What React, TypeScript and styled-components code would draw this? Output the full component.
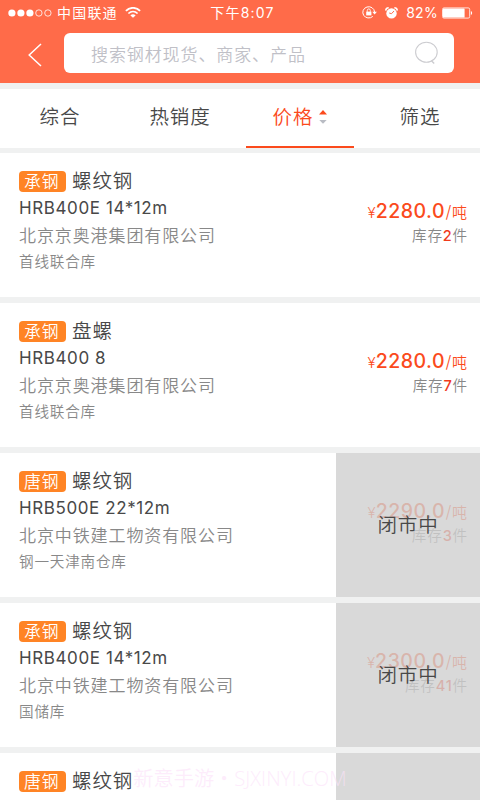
import React from 'react';
import styled, { createGlobalStyle } from 'styled-components';

interface Product {
  id: number;
  brand: string;
  name: string;
  spec: string;
  company: string;
  warehouse: string;
  price: string;
  stock: number;
  closed?: boolean;
}

const products: Product[] = [
  {
    id: 1,
    brand: '承钢',
    name: '螺纹钢',
    spec: 'HRB400E 14*12m',
    company: '北京京奥港集团有限公司',
    warehouse: '首线联合库',
    price: '2280.0',
    stock: 2,
  },
  {
    id: 2,
    brand: '承钢',
    name: '盘螺',
    spec: 'HRB400 8',
    company: '北京京奥港集团有限公司',
    warehouse: '首线联合库',
    price: '2280.0',
    stock: 7,
  },
  {
    id: 3,
    brand: '唐钢',
    name: '螺纹钢',
    spec: 'HRB500E 22*12m',
    company: '北京中铁建工物资有限公司',
    warehouse: '钢一天津南仓库',
    price: '2290.0',
    stock: 3,
    closed: true,
  },
  {
    id: 4,
    brand: '承钢',
    name: '螺纹钢',
    spec: 'HRB400E 14*12m',
    company: '北京中铁建工物资有限公司',
    warehouse: '国储库',
    price: '2300.0',
    stock: 41,
    closed: true,
  },
  {
    id: 5,
    brand: '唐钢',
    name: '螺纹钢',
    spec: '',
    company: '',
    warehouse: '',
    price: '',
    stock: 0,
    closed: true,
  },
];

const tabs = ['综合', '热销度', '价格', '筛选'];

export default function App() {
  return (
    <Page>
      <GlobalStyle />
      <Header>
        <StatusBar />
        <SearchRow>
          <BackIcon width="14" height="24" viewBox="0 0 14 24">
            <path d="M13 1 1.2 12 13 23" fill="none" stroke="#fff" strokeWidth="1.5" />
          </BackIcon>
          <SearchBox>
            <Placeholder>搜索钢材现货、商家、产品</Placeholder>
            <svg width="24" height="24" viewBox="0 0 24 24" fill="none" stroke="#ccccd0">
              <ellipse cx="12.4" cy="11.2" rx="10.8" ry="10" strokeWidth="1.1" />
              <path d="m17.4 19.7 2.8 2.8" strokeWidth="1.4" />
            </svg>
          </SearchBox>
        </SearchRow>
      </Header>
      <TabBar>
        {tabs.map((tab) => (
          <Tab key={tab} $active={tab === '价格'}>
            {tab}
            {tab === '价格' && (
              <svg width="8" height="14" viewBox="0 0 8 14">
                <path d="M0 4.5 4 0l4 4.5z" fill="#fb4a1c" />
                <path d="M0.3 10h7.4L4 13.8z" fill="#b9bcc4" />
              </svg>
            )}
          </Tab>
        ))}
      </TabBar>
      <List>
        {products.map((product) => (
          <ProductCard key={product.id} product={product} />
        ))}
      </List>
      <Watermark>新意手游・SJXINYI.COM</Watermark>
    </Page>
  );
}

function StatusBar() {
  return (
    <Status>
      <StatusLeft>
        <svg width="44" height="8" viewBox="0 0 44 8" fill="#fff">
          <circle cx="3.9" cy="4" r="3.6" />
          <circle cx="12.9" cy="4" r="3.6" />
          <circle cx="21.9" cy="4" r="3.6" />
          <g fill="none" stroke="#fff" strokeWidth="0.8">
            <circle cx="30.9" cy="4" r="3.2" />
            <circle cx="39.9" cy="4" r="3.2" />
          </g>
        </svg>
        <Carrier>中国联通</Carrier>
        <svg width="16" height="11" viewBox="0 0 16 11" fill="none" stroke="#fff">
          <path d="M0.9 3.9C5-0.2 11-0.2 15.1 3.9" strokeWidth="1.8" />
          <path d="M3.4 6.5c2.7-2.6 6.5-2.6 9.2 0" strokeWidth="1.7" />
          <path d="M8 10.8 5.4 8.4c1.5-1.4 3.7-1.4 5.2 0z" fill="#fff" stroke="none" />
        </svg>
      </StatusLeft>
      <Clock>下午8:07</Clock>
      <StatusRight>
        <svg width="15" height="13" viewBox="0 0 15 13" fill="none" stroke="#fff">
          <path d="M10.8 10.4A5.9 5.6 0 1 1 12.6 6" strokeWidth="1" />
          <path d="M10.3 5.8h4.6l-2.3 2.8z" fill="#fff" stroke="none" />
          <rect x="4.2" y="5.6" width="5.2" height="3.8" fill="#fff" stroke="none" />
          <path d="M5.3 5.8V4.4a1.5 1.5 0 0 1 3 0v1.4" strokeWidth="0.9" />
        </svg>
        <AlarmIcon width="13" height="12" viewBox="0 0 13 12">
          <circle cx="6.5" cy="6.4" r="5.2" fill="#fff" />
          <path d="M0.7 3.6A3 3 0 0 1 3.7.8M12.3 3.6A3 3 0 0 0 9.3.8" stroke="#fff" strokeWidth="1.5" fill="none" />
          <path d="M9 4 6.5 6.7 4.2 6" stroke="#ff6b49" strokeWidth="1" fill="none" />
        </AlarmIcon>
        <Percent>82%</Percent>
        <svg width="31" height="12" viewBox="0 0 31 12">
          <rect x="0.5" y="0.9" width="27.2" height="10.2" rx="1.5" fill="none" stroke="#fff" strokeWidth="0.8" />
          <rect x="1" y="1.5" width="21.6" height="9" rx="0.6" fill="#fff" />
          <path d="M28.9 4c1.6.6 1.6 3.4 0 4z" fill="#fff" />
        </svg>
      </StatusRight>
    </Status>
  );
}

function ProductCard({ product }: { product: Product }) {
  return (
    <Card>
      <Info>
        <TitleRow>
          <Badge>{product.brand}</Badge>
          <Name>{product.name}</Name>
        </TitleRow>
        <Spec>{product.spec}</Spec>
        <Company>{product.company}</Company>
        <Warehouse>{product.warehouse}</Warehouse>
      </Info>
      {product.price && (
        <Trade>
          <Price>
            <Yen>¥</Yen>
            <Amount>{product.price}</Amount>
            <Slash>/</Slash>
            <Unit>吨</Unit>
          </Price>
          <Stock>
            库存<Count>{product.stock}</Count>件
          </Stock>
        </Trade>
      )}
      {product.closed && <Closed>{product.price && '闭市中'}</Closed>}
    </Card>
  );
}

const GlobalStyle = createGlobalStyle`
  * {
    box-sizing: border-box;
  }

  body {
    margin: 0;
    font-family: Inter, 'Noto Sans CJK SC', sans-serif;
    font-weight: 350;
    color: #484848;
  }

  svg {
    display: block;
    flex-shrink: 0;
  }
`;

const Page = styled.div`
  position: relative;
  width: 480px;
  height: 800px;
  overflow: hidden;
  background: #f0f1f1;
`;

const Header = styled.header`
  height: 83px;
  background: #ff6b49;
  color: #fff;
`;

const Status = styled.div`
  display: grid;
  grid-template-columns: 1fr auto 1fr;
  align-items: center;
  height: 25px;
  padding: 0 7px 0 8px;
  font-size: 14px;
  font-weight: 400;
  line-height: 24px;
`;

const StatusLeft = styled.div`
  display: flex;
  align-items: center;
`;

const Carrier = styled.span`
  margin: 0 7px 0 5px;
  letter-spacing: 1.2px;
`;

const Clock = styled.div`
  padding-left: 4px;
  letter-spacing: 1.2px;
`;

const StatusRight = styled.div`
  display: flex;
  align-items: center;
  justify-content: flex-end;
`;

const AlarmIcon = styled.svg`
  margin: 0 8px;
`;

const Percent = styled.span`
  margin-right: 4px;
  letter-spacing: 0.3px;
`;

const SearchRow = styled.div`
  display: flex;
  align-items: center;
  padding: 8px 26px 0 28px;
`;

const BackIcon = styled.svg`
  margin-top: 3px;
`;

const SearchBox = styled.div`
  display: flex;
  flex: 1;
  align-items: center;
  justify-content: space-between;
  height: 40px;
  margin-left: 22px;
  padding: 0 16px 0 27px;
  border-radius: 6px;
  background: #fff;
`;

const Placeholder = styled.span`
  font-size: 17px;
  letter-spacing: 0.9px;
  color: #c0c0c7;
`;

const TabBar = styled.nav`
  display: grid;
  grid-template-columns: repeat(4, 1fr);
  height: 59px;
  margin-top: 6px;
  background: #fff;
`;

const Tab = styled.div<{ $active?: boolean }>`
  display: flex;
  align-items: center;
  justify-content: center;
  gap: 6px;
  width: 108px;
  margin: 0 auto;
  padding-bottom: 2px;
  border-bottom: 2px solid ${({ $active }) => ($active ? '#fb4a1c' : 'transparent')};
  font-size: 19.5px;
  letter-spacing: 0.9px;
  line-height: 30px;
  color: ${({ $active }) => ($active ? '#fb4a1c' : '#484848')};
`;

const List = styled.main`
  display: flex;
  flex-direction: column;
  gap: 6px;
  margin-top: 5px;
`;

const Card = styled.article`
  position: relative;
  display: flex;
  flex-shrink: 0;
  justify-content: space-between;
  height: 144px;
  padding: 18px 13px 0 19px;
  background: #fff;
  white-space: nowrap;
`;

const Info = styled.div``;

const TitleRow = styled.div`
  display: flex;
  align-items: center;
  gap: 6px;
  height: 20px;
  margin-bottom: 4px;
`;

const Badge = styled.span`
  width: 47px;
  height: 21px;
  padding-left: 5px;
  border-radius: 4px;
  background: #ff8425;
  color: #fff;
  font-size: 16.8px;
  letter-spacing: 1px;
  line-height: 22px;
`;

const Name = styled.span`
  font-size: 19.5px;
  letter-spacing: 0.9px;
  line-height: 20px;
`;

const Spec = styled.div`
  height: 27px;
  font-size: 17px;
  font-weight: 400;
  letter-spacing: 0.6px;
  line-height: 27px;
`;

const Company = styled.div`
  height: 27px;
  font-size: 17px;
  letter-spacing: 0.9px;
  line-height: 28px;
  color: #888;
`;

const Warehouse = styled.div`
  font-size: 14.6px;
  letter-spacing: 0.8px;
  line-height: 27px;
  color: #888;
`;

const Trade = styled.div`
  padding-top: 28px;
  text-align: right;
`;

const Price = styled.div`
  display: flex;
  align-items: baseline;
  justify-content: flex-end;
  height: 25px;
  line-height: 24px;
  color: #fb4a1c;
`;

const Yen = styled.span`
  font-size: 15px;
`;

const Amount = styled.span`
  font-size: 19.5px;
  font-weight: 500;
  letter-spacing: 0.5px;
`;

const Slash = styled.span`
  width: 7px;
  font-size: 17px;
  text-align: center;
`;

const Unit = styled.span`
  font-size: 15px;
`;

const Stock = styled.div`
  font-size: 14.6px;
  letter-spacing: 0.8px;
  margin-right: -1px;
  line-height: 24px;
  color: #888;
`;

const Count = styled.span`
  font-weight: 500;
  color: #f03a1c;
`;

const Closed = styled.div`
  position: absolute;
  top: 0;
  right: 0;
  bottom: 0;
  display: flex;
  align-items: center;
  justify-content: center;
  width: 144px;
  padding-bottom: 3px;
  background: rgba(208, 208, 208, 0.8);
  font-size: 19.5px;
  letter-spacing: 0.9px;
`;

const Watermark = styled.div`
  position: absolute;
  right: 0;
  bottom: 8px;
  left: 0;
  font-family: 'Open Sans', 'Noto Sans CJK SC', sans-serif;
  font-size: 20.2px;
  line-height: 28px;
  text-align: center;
  color: rgba(252, 226, 250, 0.65);
`;
